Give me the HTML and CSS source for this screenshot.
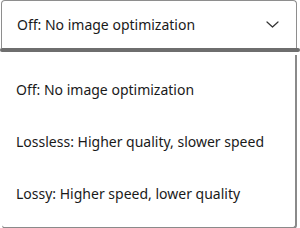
FILE: index.html
```html
<!DOCTYPE html>
<html>
<head>
  <title>Image optimization</title>
  <link rel="stylesheet" href="styles.css">
</head>
<body>
  <div class="select">
    <div class="select-box">
      <span class="select-value">Off: No image optimization</span>
      <svg class="chevron" width="13" height="7" viewBox="0 0 13 7">
        <path d="M1 1 L6.5 6 L12 1" fill="none" stroke="#333" stroke-width="1.2" stroke-linecap="round" stroke-linejoin="round"/>
      </svg>
    </div>
    <div class="select-line"></div>
  </div>
  <ul class="menu">
    <li class="option">Off: No image optimization</li>
    <li class="option">Lossless: Higher quality, slower speed</li>
    <li class="option">Lossy: Higher speed, lower quality</li>
  </ul>
</body>
</html>
```

FILE: styles.css
```css
body {
  margin: 0;
  background: #fff;
  font-family: "Noto Sans", Arial, sans-serif;
  font-size: 14px;
  color: #1a1a1a;
  width: 300px;
  height: 228px;
  overflow: hidden;
}
.select {
  display: flex;
  flex-direction: column;
}
.select-box {
  display: flex;
  align-items: center;
  justify-content: space-between;
  height: 47px;
  margin: 0 3px 0 1px;
  padding: 0 17px 0 15px;
  border: 1px solid #8e8e8e;
  border-bottom: none;
  border-radius: 4px 4px 0 0;
}
.chevron {
  margin-top: -1px;
}
.select-line {
  height: 4px;
  background: #6e6e6e;
  border-radius: 2px;
}
.menu {
  list-style: none;
  margin: 3px 3px 0 2px;
  padding: 8px 0;
  background: #fff;
  border-right: 2px solid #8a8a8a;
  border-bottom: 2px solid #8a8a8a;
  border-radius: 0 0 4px 4px;
}
.option {
  height: 52px;
  display: flex;
  align-items: center;
  padding: 0 14px;
  white-space: nowrap;
}
```
